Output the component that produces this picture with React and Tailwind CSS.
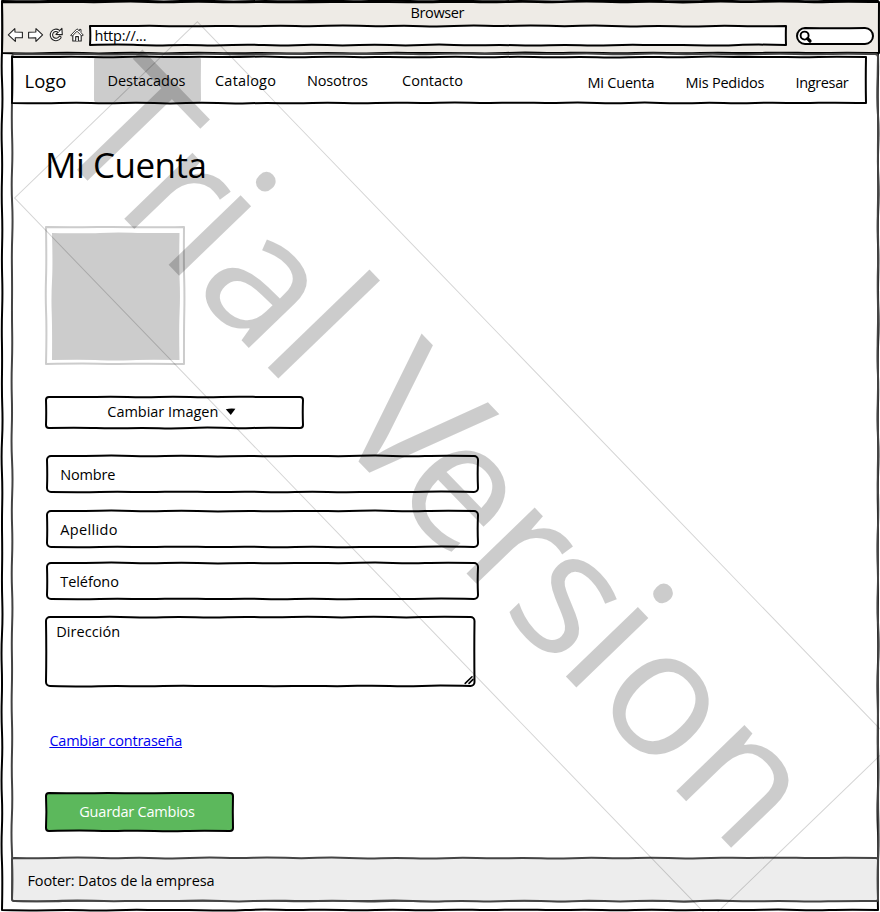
const noise = (n) => {
  const v = Math.sin(n * 12.9898 + 4.137) * 43758.5453;
  return (v - Math.floor(v)) * 2 - 1;
};

function side(x1, y1, x2, y2, seed, amp) {
  const len = Math.hypot(x2 - x1, y2 - y1);
  if (len < 12) return `L${x2} ${y2}`;
  const n = Math.max(2, Math.round(len / 32));
  const nx = -(y2 - y1) / len;
  const ny = (x2 - x1) / len;
  const pts = [];
  for (let i = 1; i < n; i++) {
    const sign = i % 2 ? 1 : -1;
    const o = sign * amp * (0.55 + 0.45 * noise(seed + i));
    const t = i / n;
    pts.push([x1 + (x2 - x1) * t + nx * o, y1 + (y2 - y1) * t + ny * o]);
  }
  let d = "";
  pts.forEach(([x, y], i) => {
    const [mx, my] = i === pts.length - 1 ? [x2, y2] : [(x + pts[i + 1][0]) / 2, (y + pts[i + 1][1]) / 2];
    d += `Q${x.toFixed(2)} ${y.toFixed(2)} ${mx.toFixed(2)} ${my.toFixed(2)}`;
  });
  return d;
}

function sketchRect(w, h, r, seed, amp) {
  const arc = (x, y) => (r ? `A${r} ${r} 0 0 1 ${x} ${y}` : "");
  return (
    `M${r} 0` +
    side(r, 0, w - r, 0, seed, amp) +
    arc(w, r) +
    side(w, r, w, h - r, seed + 31, amp) +
    arc(w - r, h) +
    side(w - r, h, r, h, seed + 67, amp) +
    arc(0, h - r) +
    side(0, h - r, 0, r, seed + 97, amp) +
    arc(r, 0) +
    "Z"
  );
}

function Sketch({ w, h, r = 0, seed = 1, amp = 1, stroke = "#000", fill = "none", sw = 2 }) {
  return (
    <svg className="pointer-events-none absolute top-0 left-0 overflow-visible" width={w} height={h}>
      <path d={sketchRect(w, h, r, seed, amp)} fill={fill} stroke={stroke} strokeWidth={sw} strokeLinejoin="round" />
    </svg>
  );
}

function Field({ label, className }) {
  return (
    <div className={`relative flex h-[36px] w-[431px] pt-[9px] pl-[13px] ${className}`}>
      <Sketch w={431} h={36} r={4} seed={5} amp={0.8} />
      <span className="relative">{label}</span>
    </div>
  );
}

function ToolbarIcons() {
  return (
    <svg className="mt-[1px] ml-[7px] shrink-0" width="78" height="18" viewBox="7 27 78 18" fill="#fff" stroke="#222" strokeWidth="1.1" strokeLinejoin="round">
      <path d="M8.3 34.8 L14.8 28.6 L15 32 L22.4 32.2 L22.4 37.8 L15.3 37.8 L15.3 41.4 Z" />
      <path d="M42.6 34.8 L36 28.6 L35.8 32 L28.6 32.2 L28.6 38 L35.8 37.8 L36 41.4 Z" />
      <path d="M58.6 31.1 A4.6 4.6 0 1 0 59.9 37.4" fill="none" strokeWidth="3.4" strokeLinecap="round" />
      <path d="M61.9 28.4 L62.3 34.6 L56 34.4 Z" />
      <path d="M58.6 31.1 A4.6 4.6 0 1 0 59.9 37.4" fill="none" stroke="#fff" strokeWidth="1.3" strokeLinecap="round" />
      <path d="M72.8 35 L72.8 41 L81.2 41 L81.2 35" />
      <path d="M70.6 35.4 L77 28.8 L79.3 31 L79.4 29.4 L81 29.4 L81 32.6 L83.3 35.2 L81.8 36 L77 31.2 L72.3 36 Z" strokeWidth="0.9" />
      <path d="M75.7 41 L75.7 36.6 L78.4 36.6 L78.4 41" />
    </svg>
  );
}

const watermark = [
  ["T", -501, 183],
  ["r", -405.2, 177],
  ["i", -342, 187],
  ["a", -294.4, 177],
  ["l", -199, 186],
  [" ", -150, 177],
  ["V", -101, 188],
  ["e", -9, 177],
  ["r", 87.8, 177],
  ["s", 151.5, 177],
  ["i", 230, 187],
  ["o", 280, 177],
  ["n", 390, 177],
];

function Watermark() {
  return (
    <svg className="pointer-events-none absolute inset-0" width="880" height="912">
      <g transform="translate(440 456) rotate(46.02)">
        <rect x="-481" y="-127" width="1002" height="254" fill="none" stroke="#000" strokeOpacity="0.17" />
        <text y="62.5" fill="#000" fillOpacity="0.2" className="font-['Open_Sans',sans-serif]">
          {watermark.map(([ch, x, size], i) => (
            <tspan key={i} x={x} fontSize={size}>
              {ch}
            </tspan>
          ))}
        </text>
      </g>
    </svg>
  );
}

export default function App() {
  return (
    <div className="relative h-[912px] w-[880px] overflow-hidden bg-white font-['Open_Sans',sans-serif] text-[14.5px] leading-5 whitespace-nowrap text-black">
      <div className="absolute top-px left-[2px]">
        <Sketch w={876} h={909} seed={3} amp={0.9} />
      </div>

      <header className="relative h-[52px] pt-[3px]">
        <div className="absolute top-[1.5px] left-[1.5px]">
          <Sketch w={877} h={51} seed={11} fill="#eeebe6" amp={0.8} />
        </div>
        <div className="relative pl-[410.5px] tracking-[-0.37px]">Browser</div>
        <div className="relative mt-[3px] flex">
          <ToolbarIcons />
          <div className="relative ml-[5px] h-[19px] w-[696px] pl-[4.5px] leading-[19px] tracking-[-0.22px]">
            <Sketch w={696} h={19} seed={21} fill="#fff" amp={0.9} />
            <span className="relative">http://...</span>
          </div>
          <div className="relative mt-[2px] ml-[11px] h-[16px] w-[76px]">
            <Sketch w={76} h={16} r={8} seed={9} fill="#fff" amp={0.5} />
            <svg className="relative" width="18" height="17" fill="none" stroke="#000" strokeLinecap="round">
              <circle cx="7.6" cy="7.6" r="4" strokeWidth="1.9" />
              <path d="M10.6 10.6 L13 13" strokeWidth="3.2" />
            </svg>
          </div>
        </div>
      </header>

      <div className="relative mt-[2px] ml-[11.5px] h-[847px] w-[866px] pt-[3px]">
        <Sketch w={866} h={847} r={3} seed={41} stroke="#444" amp={0.9} />

        <nav className="relative flex h-[46px] w-[854px]">
          <div className="w-[82px] pt-[11px] pl-[13px] text-[18.5px] leading-[26px]">Logo</div>
          <div className="relative w-[107px] pt-[14px] pl-[14px] tracking-[-0.035px]">
            <Sketch w={107} h={45.5} r={3} seed={14} stroke="none" fill="#ccc" amp={0.7} />
            <span className="relative">Destacados</span>
          </div>
          <div className="ml-[14.5px] w-[92px] pt-[14px] tracking-[0.22px]">Catalogo</div>
          <div className="w-[95px] pt-[14px] tracking-[-0.145px]">Nosotros</div>
          <div className="pt-[14px] tracking-[0.027px]">Contacto</div>
          <div className="ml-auto w-[98px] pt-[16px] tracking-[-0.22px]">Mi Cuenta</div>
          <div className="w-[110px] pt-[16px] tracking-[-0.23px]">Mis Pedidos</div>
          <div className="w-[70px] pt-[16px] tracking-[-0.36px]">Ingresar</div>
          <Sketch w={854} h={46} seed={51} amp={0.8} />
        </nav>

        <main className="relative pl-[34.5px]">
          <h1 className="-ml-[1px] pt-[38px] text-[35px] leading-[48px] tracking-[-0.5px]">Mi Cuenta</h1>

          <div className="relative mt-[38px] h-[137px] w-[138px] p-[5.5px]">
            <Sketch w={138} h={137} stroke="#ccc" seed={61} amp={0.8} />
            <div className="relative h-[127px] w-[127px]">
              <Sketch w={127.5} h={127} stroke="none" fill="#ccc" seed={71} amp={0.9} />
            </div>
          </div>

          <div className="relative mt-[33px] flex h-[31px] w-[257px] pt-[5px] pl-[61.3px]">
            <Sketch w={257} h={31} r={3} seed={81} amp={0.8} />
            <span className="relative tracking-[-0.026px]">Cambiar Imagen</span>
            <svg className="relative mt-[4.5px] ml-[7px]" width="12" height="9">
              <path d="M0.8 2.2 Q5.5 1.2 10.4 1.8 L5.8 8 Z" />
            </svg>
          </div>

          <Field label="Nombre" className="mt-[28px] ml-[1.3px] tracking-[-0.2px]" />
          <Field label="Apellido" className="mt-[19px] ml-[1.3px] tracking-[0.35px]" />
          <Field label="Teléfono" className="mt-[16px] ml-[1.3px] tracking-[-0.08px]" />

          <div className="relative mt-[18px] h-[69px] w-[428.5px] pt-[5px] pl-[10.3px] tracking-[0.05px]">
            <Sketch w={428.5} h={69} r={4} seed={91} amp={0.8} />
            <span className="relative">Dirección</span>
            <svg className="absolute right-0 bottom-0" width="12" height="12" stroke="#000" strokeWidth="1.6" strokeLinecap="round">
              <path d="M2.2 9.4 L9 2.8 M6 9.4 L10 5.4" />
            </svg>
          </div>

          <a className="mt-[45px] ml-[3.4px] block w-fit tracking-[-0.22px] text-[#0000ee] underline decoration-1 underline-offset-[1px]">
            Cambiar contraseña
          </a>

          <div className="relative mt-[42px] h-[38px] w-[187px] pt-[9px] pl-[33.3px] tracking-[-0.22px] text-white">
            <Sketch w={187} h={38} r={3} seed={17} fill="#5cb85c" amp={0.8} />
            <span className="relative">Guardar Cambios</span>
          </div>
        </main>

        <footer className="relative mt-[27px] h-[43px] pt-[13px] pl-[16px] tracking-[-0.14px]">
          <Sketch w={866} h={43} r={2} seed={27} stroke="#444" fill="#ededed" amp={0.9} />
          <span className="relative">Footer: Datos de la empresa</span>
        </footer>
      </div>

      <Watermark />
    </div>
  );
}
